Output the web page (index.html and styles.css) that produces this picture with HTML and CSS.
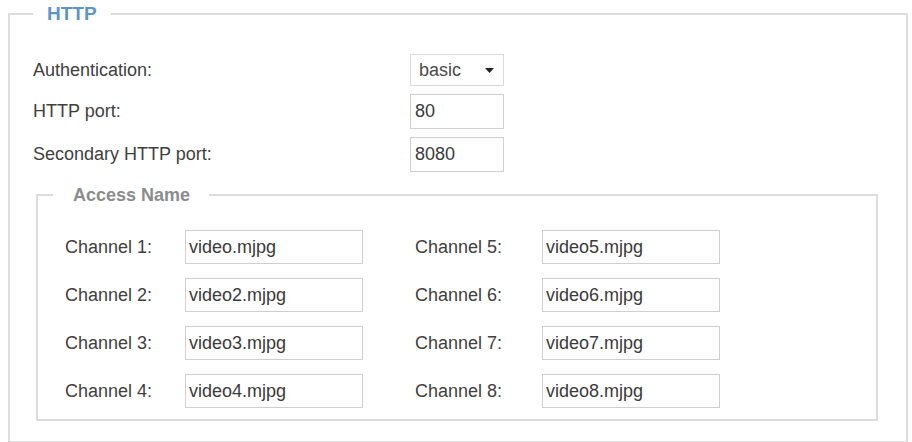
FILE: index.html
```html
<!DOCTYPE html>
<html>
<head>
<meta charset="utf-8">
<link rel="stylesheet" href="styles.css">
</head>
<body>
<div class="page">
  <fieldset class="outer">
    <legend class="outer-legend">HTTP</legend>
    <div class="rows">
      <div class="row">
        <span class="label">Authentication:</span>
        <div class="select">
          <span class="select-value">basic</span>
          <svg class="caret" width="9" height="5" viewBox="0 0 9 5"><path d="M0 0 L9 0 L4.5 5 Z" fill="#222"/></svg>
        </div>
      </div>
      <div class="row">
        <span class="label">HTTP port:</span>
        <div class="input short">80</div>
      </div>
      <div class="row">
        <span class="label">Secondary HTTP port:</span>
        <div class="input short">8080</div>
      </div>
    </div>
    <fieldset class="inner">
      <legend class="inner-legend">Access Name</legend>
      <div class="channels">
        <div class="chan"><span class="chan-label">Channel 1:</span><div class="input long">video.mjpg</div></div>
        <div class="chan"><span class="chan-label">Channel 2:</span><div class="input long">video2.mjpg</div></div>
        <div class="chan"><span class="chan-label">Channel 3:</span><div class="input long">video3.mjpg</div></div>
        <div class="chan"><span class="chan-label">Channel 4:</span><div class="input long">video4.mjpg</div></div>
        <div class="chan"><span class="chan-label wide">Channel 5:</span><div class="input long">video5.mjpg</div></div>
        <div class="chan"><span class="chan-label wide">Channel 6:</span><div class="input long">video6.mjpg</div></div>
        <div class="chan"><span class="chan-label wide">Channel 7:</span><div class="input long">video7.mjpg</div></div>
        <div class="chan"><span class="chan-label wide">Channel 8:</span><div class="input long">video8.mjpg</div></div>
      </div>
    </fieldset>
  </fieldset>
</div>
</body>
</html>
```

FILE: styles.css
```css
html, body {
  margin: 0;
  padding: 0;
  background: #ffffff;
}

body {
  font-family: "Liberation Sans", Arial, sans-serif;
  color: #404040;
  font-size: 18px;
}

.page {
  padding: 4px 4px 0 8px;
}

.outer {
  box-sizing: border-box;
  width: 900px;
  margin: 0;
  border: 2px solid #dcdcdc;
  padding: 30px 20px 20px 23px;
  min-width: 0;
}

.outer-legend {
  padding: 0 14px;
  margin-left: 0;
  font-size: 19px;
  line-height: 20px;
  font-weight: bold;
  color: #5b95c8;
}

.rows {
  display: flex;
  flex-direction: column;
  gap: 8px;
}

.row {
  display: flex;
  align-items: center;
}

.label {
  flex: 0 0 377px;
}

.select {
  box-sizing: border-box;
  width: 94px;
  height: 32px;
  border: 1px solid #dadada;
  display: flex;
  align-items: center;
  justify-content: space-between;
  padding: 0 9px 0 8px;
  color: #4a4a4a;
}

.caret {
  display: block;
}

.input {
  box-sizing: border-box;
  height: 35px;
  border: 1px solid #cfcfcf;
  display: flex;
  align-items: center;
  color: #3a3a3a;
}

.short {
  width: 94px;
  padding-left: 4px;
}

.long {
  width: 178px;
  height: 34px;
  padding-left: 3px;
}

.inner {
  box-sizing: border-box;
  width: 842px;
  margin: 12px 0 0 3px;
  border: 2px solid #dcdcdc;
  padding: 24px 10px 11px 27px;
  min-width: 0;
}

.inner-legend {
  padding: 0 19px 0 20px;
  margin-left: -12px;
  font-size: 18px;
  line-height: 22px;
  font-weight: bold;
  color: #8c8c8c;
}

.channels {
  display: grid;
  grid-auto-flow: column;
  grid-template-rows: repeat(4, 34px);
  grid-template-columns: 298px 305px;
  column-gap: 52px;
  row-gap: 14px;
}

.chan {
  display: flex;
  align-items: center;
}

.chan-label {
  flex: 0 0 120px;
}

.chan-label.wide {
  flex-basis: 127px;
}
```
